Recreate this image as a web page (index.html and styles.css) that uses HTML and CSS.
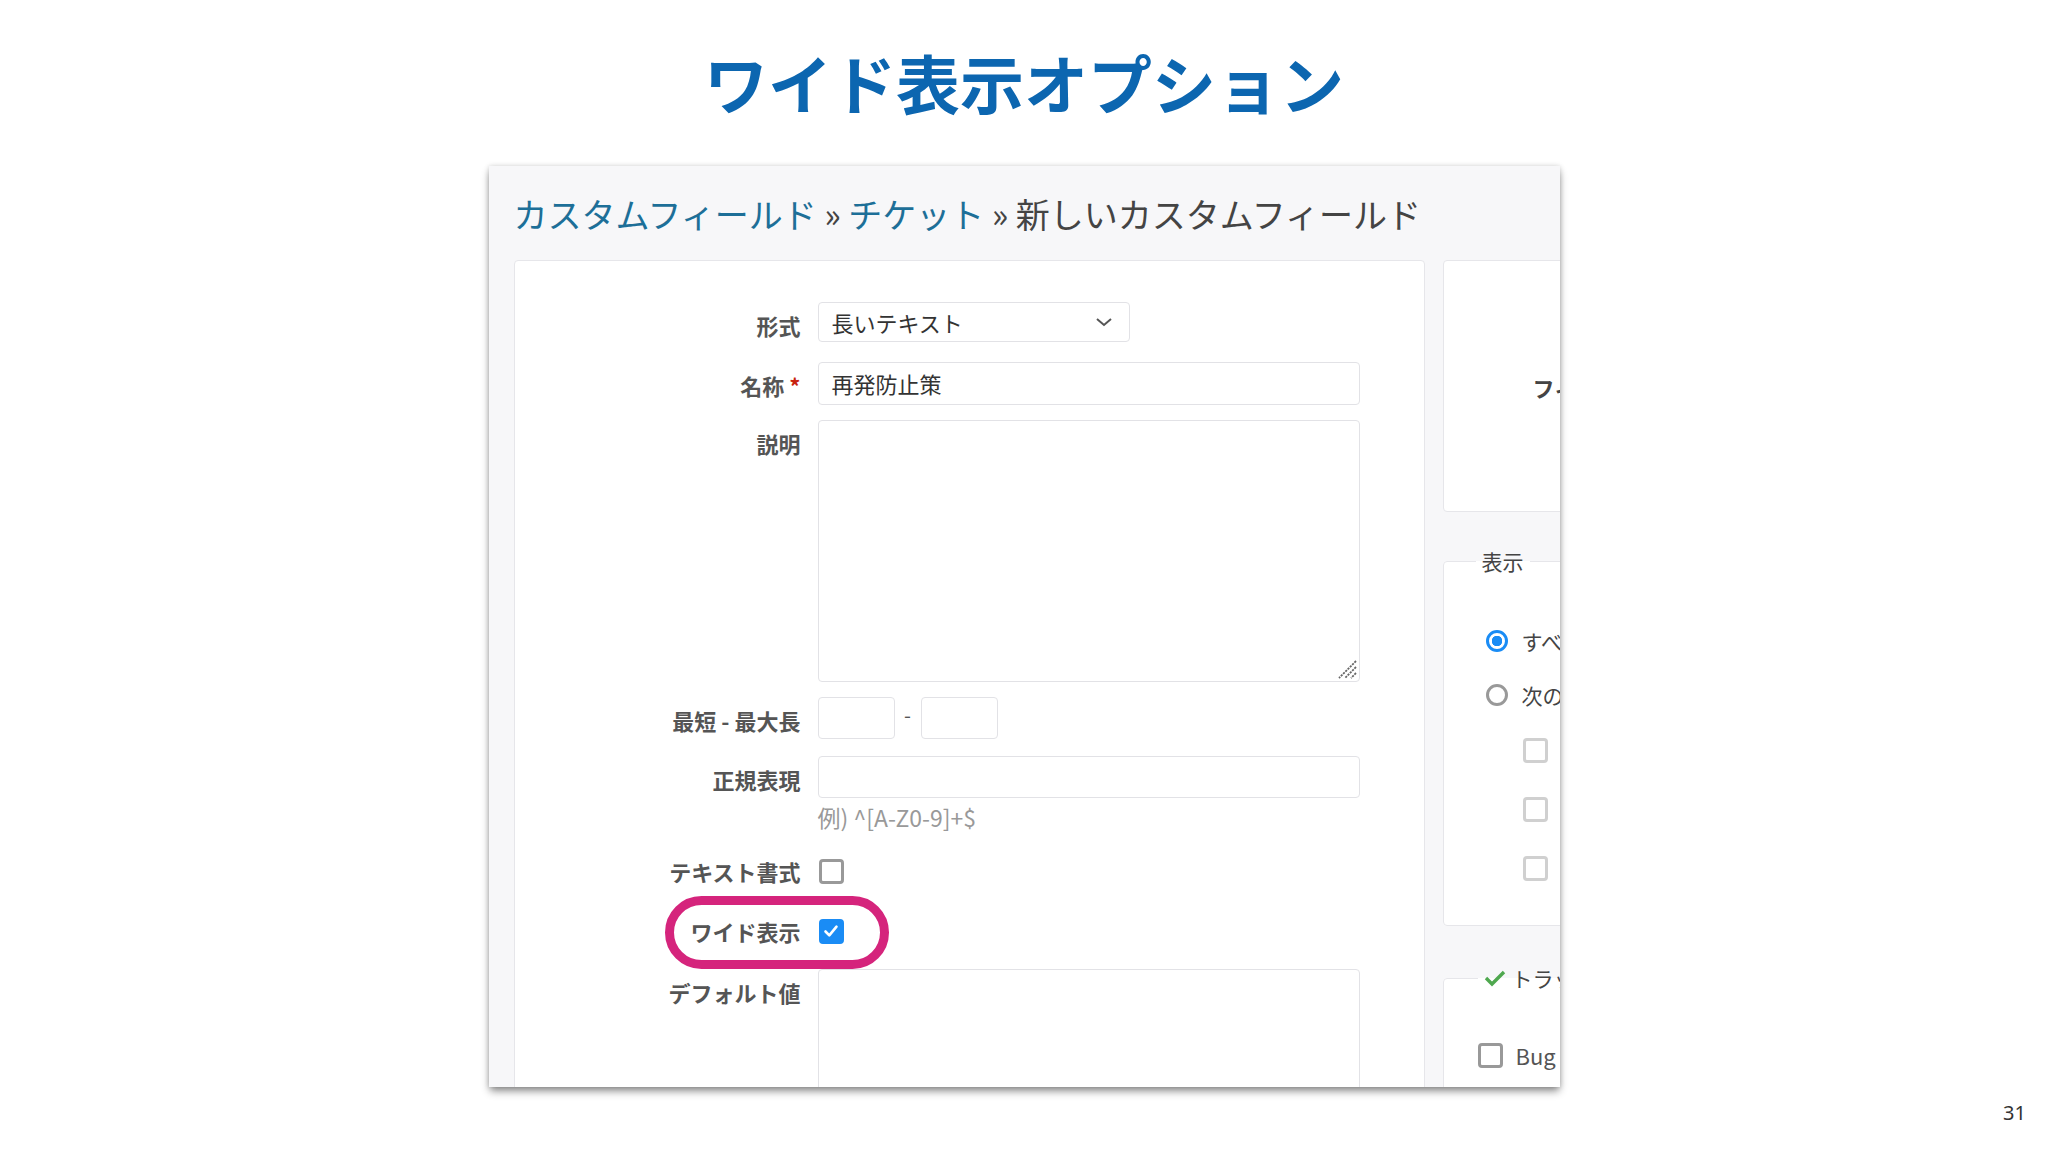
FILE: index.html
```html
<!DOCTYPE html>
<html lang="ja">
	<head>
		<meta charset="UTF-8" />
		<meta name="viewport" content="width=device-width, initial-scale=1.0" />
		<title>ワイド表示オプション</title>
		<link rel="stylesheet" href="styles.css">
	</head>
	<body>
		<h1 class="title">ワイド表示オプション</h1>

		<div class="shot">
			<h2 class="crumb">
				<a href="#">カスタムフィールド</a> » <a href="#">チケット</a> » 新しいカスタムフィールド
			</h2>

			<div class="columns">
				<div class="box main">
					<div class="row r1">
						<label>形式</label>
						<div class="select">
							<span>長いテキスト</span>
							<svg width="18" height="12" viewBox="0 0 18 12"><path d="M2 3l7 6 7-6" fill="none" stroke="#555" stroke-width="2"/></svg>
						</div>
					</div>

					<div class="row r2">
						<label>名称 <span class="req">*</span></label>
						<div class="input">再発防止策</div>
					</div>

					<div class="row">
						<label>説明</label>
						<div class="input area">
							<svg class="grip" width="22" height="22" viewBox="0 0 22 22">
								<path d="M21 4L4 21M21 10L10 21M21 16L16 21" stroke="#666" stroke-width="1.8" stroke-dasharray="2.2 1"/>
							</svg>
						</div>
					</div>

					<div class="row">
						<label>最短 - 最大長</label>
						<div class="minmax">
							<div class="input small"></div>
							<span class="dash">-</span>
							<div class="input small"></div>
						</div>
					</div>

					<div class="row r5">
						<label>正規表現</label>
						<div>
							<div class="input"></div>
							<p class="hint">例) ^[A-Z0-9]+$</p>
						</div>
					</div>

					<div class="row check">
						<label>テキスト書式</label>
						<span class="cb"></span>
					</div>

					<div class="row check wide">
						<label>ワイド表示</label>
						<span class="cb on">
							<svg width="18" height="18" viewBox="0 0 18 18"><path d="M3.5 9.5l3.8 3.8 7.2-8.6" fill="none" stroke="#fff" stroke-width="2.6" stroke-linecap="round" stroke-linejoin="round"/></svg>
						</span>
						<span class="mark"></span>
					</div>

					<div class="row r8">
						<label>デフォルト値</label>
						<div class="input area tall"></div>
					</div>
				</div>

				<div class="side">
					<div class="box top">
						<b>フィールド</b>
					</div>

					<fieldset class="box fs">
						<legend>表示</legend>
						<div class="opt first"><span class="radio on"></span>すべてのロール</div>
						<div class="opt"><span class="radio"></span>次のロールのみ</div>
						<div class="sub first"><span class="cb light"></span></div>
						<div class="sub"><span class="cb light"></span></div>
						<div class="sub"><span class="cb light"></span></div>
					</fieldset>

					<fieldset class="box fs trk">
						<legend>
							<svg width="22" height="18" viewBox="0 0 22 18"><path d="M2 9l6 6L20 3" fill="none" stroke="#4fa84f" stroke-width="3.4"/></svg>
							トラッカー
						</legend>
						<div class="opt bug"><span class="cb"></span>Bug</div>
					</fieldset>
				</div>
			</div>
		</div>

		<p class="page">31</p>
	</body>
</html>
```

FILE: styles.css
```css
* {
	padding: 0;
	margin: 0;
	box-sizing: border-box;
}

body {
	width: 2048px;
	height: 1152px;
	background: #fff;
	font-family: "Noto Sans CJK JP", "Noto Sans", sans-serif;
	color: #333;
	padding-top: 49px;
	overflow: hidden;
}

.title {
	font-size: 64px;
	line-height: 64px;
	font-weight: 700;
	color: #0c66b0;
	text-align: center;
}

.shot {
	width: 1071px;
	height: 921px;
	margin: 53px auto 0;
	padding: 28px 0 0 25px;
	background: #f7f7f9;
	overflow: hidden;
	box-shadow: 0 5px 8px -1px rgba(0, 0, 0, 0.45), 0 0 5px rgba(0, 0, 0, 0.15);
}

.crumb {
	font-size: 34px;
	line-height: 40px;
	font-weight: 400;
	color: #444;
	white-space: nowrap;
}
.crumb a {
	color: #1d6f98;
	text-decoration: none;
}

.columns {
	display: flex;
	gap: 18px;
	margin-top: 26px;
}

.box {
	background: #fff;
	border: 1px solid #e6e6ea;
	border-radius: 4px;
}

.main {
	flex: 0 0 911px;
	height: 900px;
	padding-top: 41px;
}

.row {
	display: flex;
	position: relative;
	margin-bottom: 15px;
}
.row label {
	flex: 0 0 303px;
	padding: 2px 17px 0 0;
	text-align: right;
	font-size: 22px;
	line-height: 42px;
	font-weight: 700;
	color: #555;
}
.req {
	color: #c8230f;
}
.r1 {
	margin-bottom: 16px;
}
.r2 {
	margin-bottom: 14px;
}

.select,
.input {
	width: 542px;
	height: 42px;
	border: 1px solid #e2e2e6;
	border-radius: 4px;
	background: #fff;
	font-size: 22px;
	line-height: 40px;
	padding-left: 13px;
	color: #333;
}
.select {
	width: 312px;
	height: 40px;
	line-height: 36px;
	display: flex;
	justify-content: space-between;
	align-items: center;
	padding-right: 16px;
}
.r2 .input {
	height: 43px;
}

.area {
	height: 262px;
	position: relative;
}
.grip {
	position: absolute;
	right: 2px;
	bottom: 2px;
}
.tall {
	height: 300px;
}

.minmax {
	display: flex;
	align-items: flex-start;
}
.small {
	width: 77px;
}
.dash {
	width: 26px;
	text-align: center;
	font-size: 20px;
	line-height: 36px;
	color: #555;
}

.r5 {
	margin-bottom: 0;
}
.hint {
	font-size: 23px;
	line-height: 24px;
	margin-top: 7px;
	color: #999;
}

.row.check {
	align-items: center;
	height: 30px;
	margin: 27px 0 0;
}
.row.check label {
	line-height: 30px;
	padding-top: 0;
}
.row.wide {
	margin-top: 30px;
}
.r8 {
	margin-top: 23px;
}

.cb {
	display: inline-flex;
	align-items: center;
	justify-content: center;
	width: 25px;
	height: 25px;
	border: 3px solid #999;
	border-radius: 4px;
	background: #fff;
	margin-left: 1px;
}
.cb.on {
	background: #1a8cf5;
	border-color: #1a8cf5;
}
.cb.light {
	border-color: #d0d0d0;
}

.mark {
	position: absolute;
	left: 150px;
	top: -20px;
	width: 224px;
	height: 73px;
	border: 9px solid #d5247c;
	border-radius: 37px;
}

.side {
	flex: 0 0 320px;
	display: flex;
	flex-direction: column;
}
.top {
	height: 252px;
	padding: 111px 0 0 89px;
	font-size: 22px;
	line-height: 30px;
	color: #444;
	white-space: nowrap;
}

.fs {
	margin-top: 34px;
	height: 380px;
	padding: 0 0 0 42px;
	font-size: 21px;
	color: #444;
}
.fs legend {
	padding: 0 6px;
	margin-left: -10px;
	line-height: 30px;
	white-space: nowrap;
}
.opt {
	display: flex;
	align-items: center;
	height: 30px;
	white-space: nowrap;
	margin-top: 24px;
}
.opt.first {
	margin-top: 50px;
}
.radio {
	width: 22px;
	height: 22px;
	border: 3px solid #999;
	border-radius: 50%;
	margin-right: 14px;
	flex: none;
}
.radio.on {
	border-color: #1a8cf5;
	background: radial-gradient(circle, #1a8cf5 0 5px, #fff 5.5px);
}
.sub {
	margin: 0 0 34px 36px;
	height: 25px;
}
.sub.first {
	margin-top: 28px;
}

.fs.trk {
	margin-top: 37px;
	height: 200px;
	padding-left: 34px;
}
.trk legend {
	margin-left: 0;
	display: flex;
	align-items: center;
	gap: 6px;
}
.bug {
	margin-top: 47px;
	margin-left: -1px;
	color: #555;
	font-size: 22px;
}
.bug .cb {
	margin-right: 13px;
}

.page {
	text-align: right;
	padding-right: 22px;
	margin-top: 16px;
	font-family: "Noto Sans", sans-serif;
	font-size: 20px;
	line-height: 20px;
	color: #333;
}
```
